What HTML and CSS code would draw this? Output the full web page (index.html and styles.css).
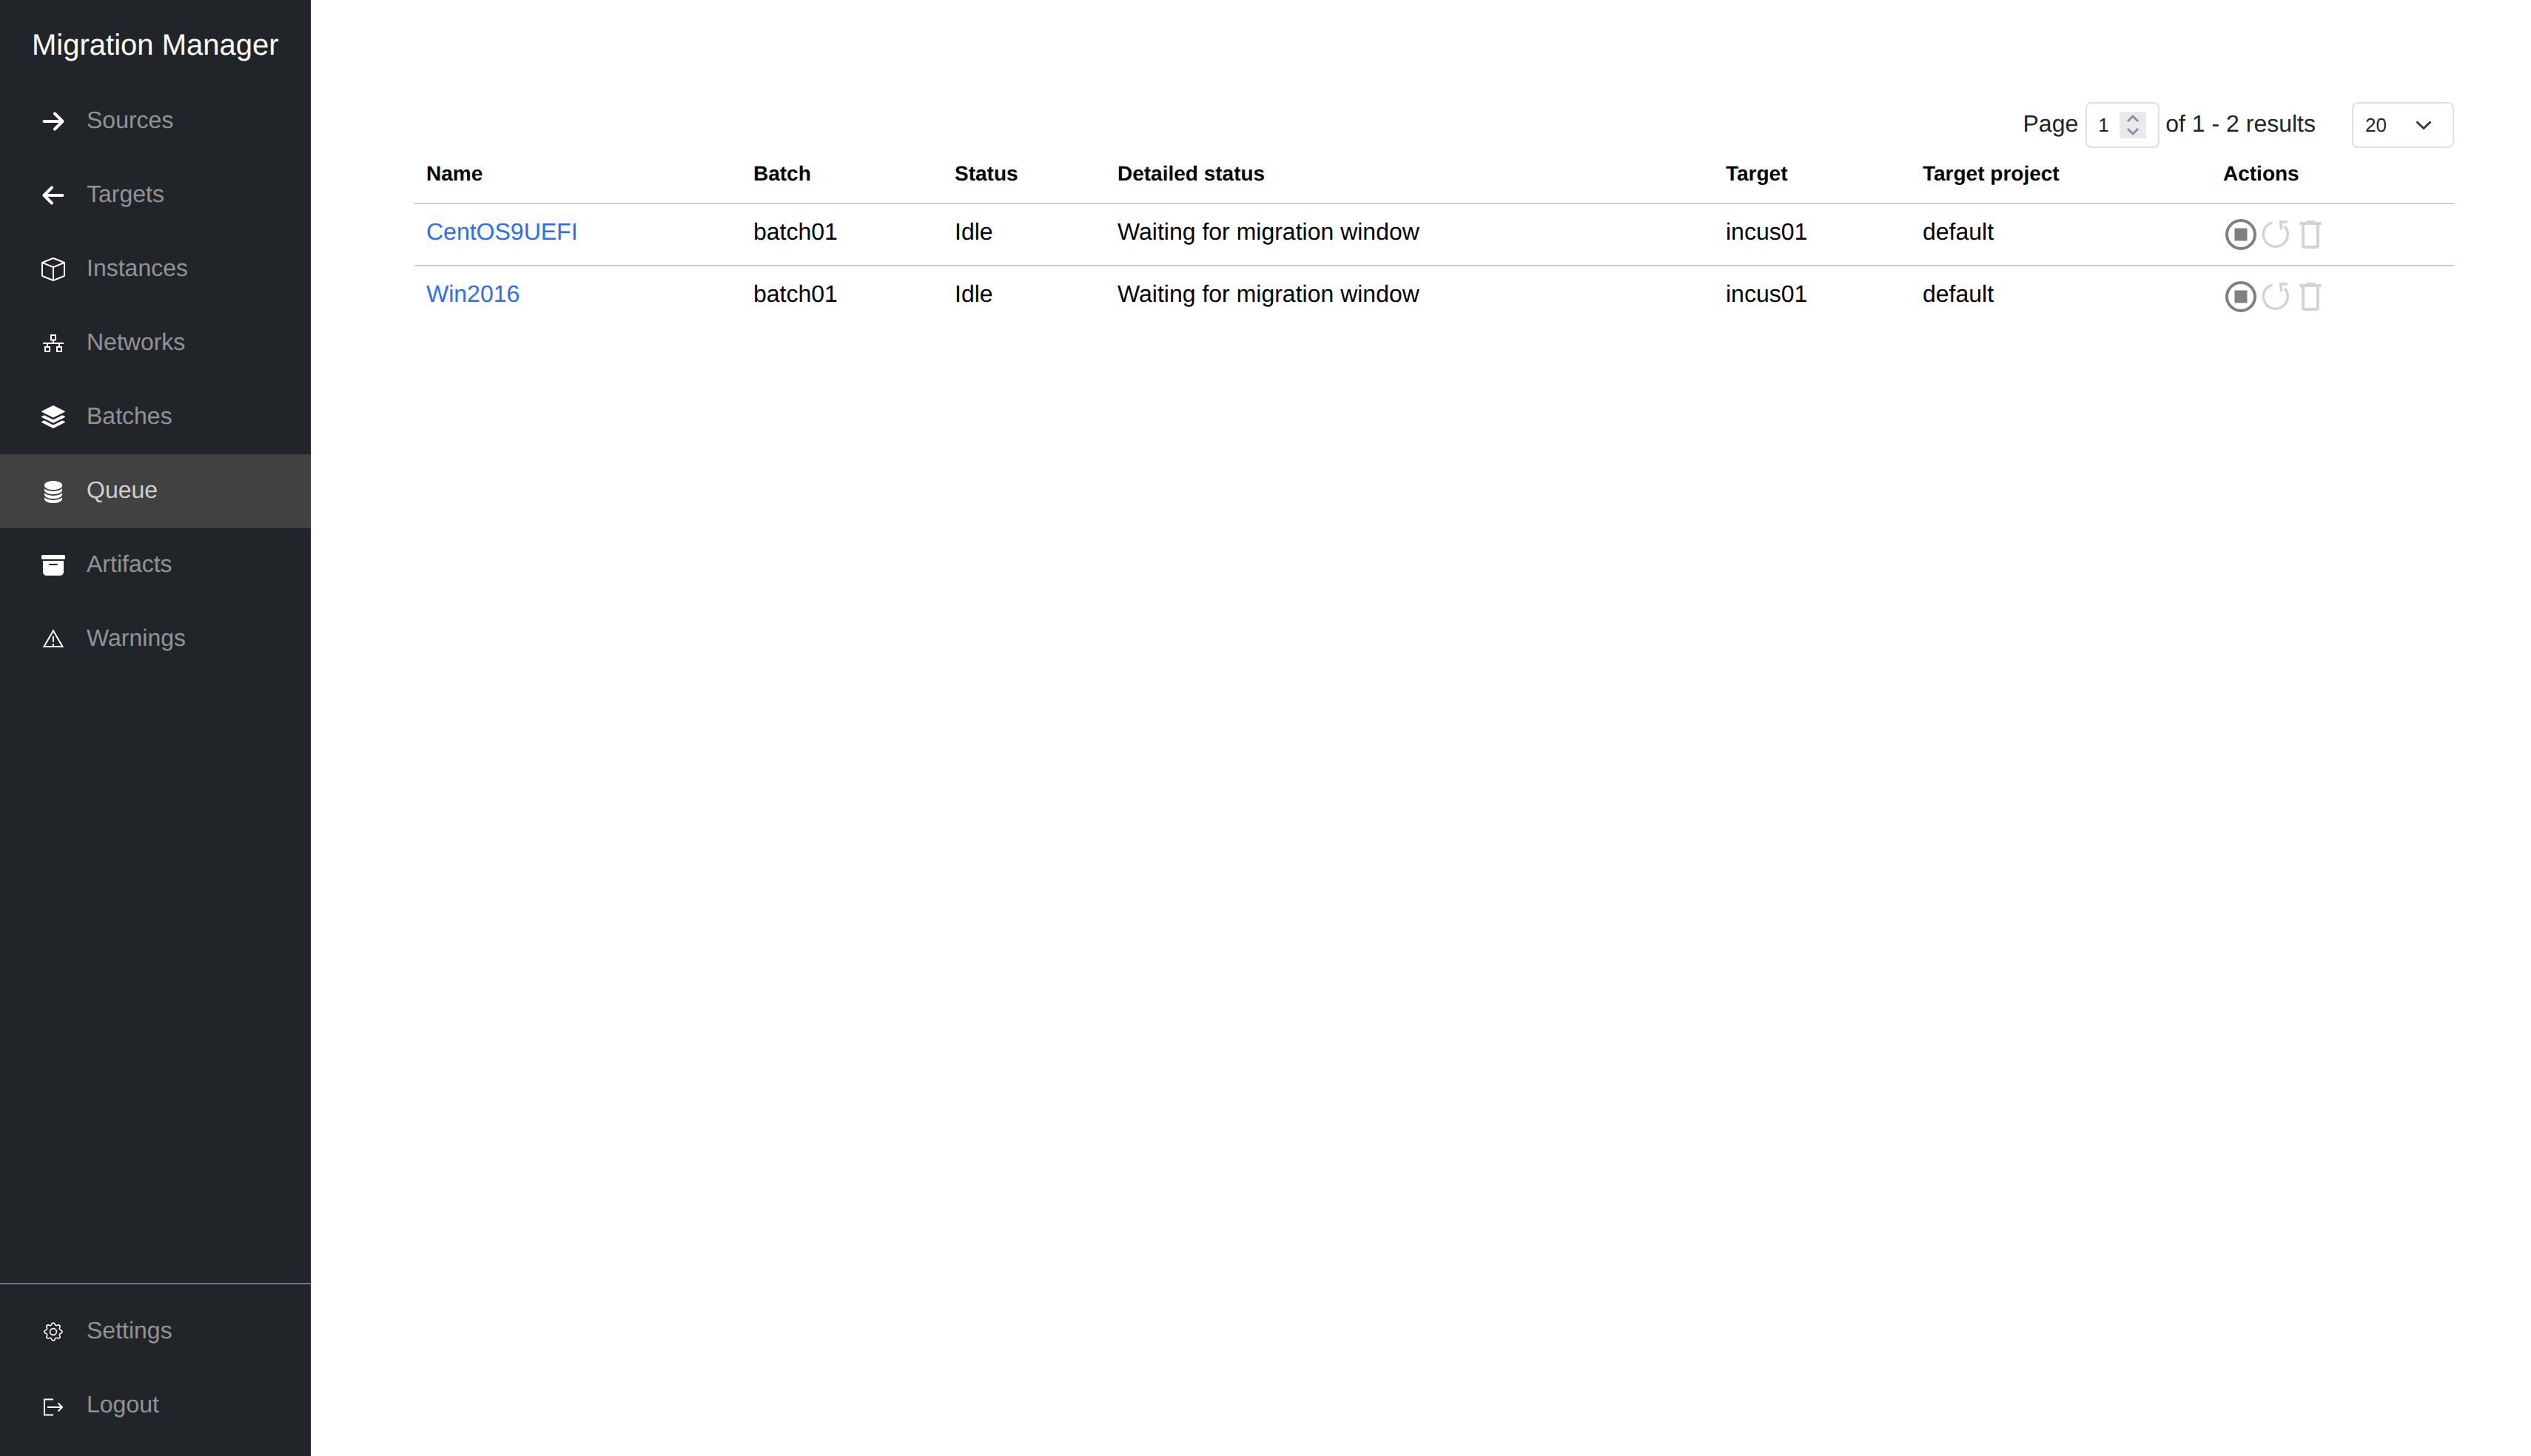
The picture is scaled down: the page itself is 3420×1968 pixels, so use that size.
FILE: index.html
```html
<!DOCTYPE html>
<html lang="en">
<head>
<meta charset="utf-8">
<title>Migration Manager</title>
<link rel="stylesheet" href="styles.css">
</head>
<body>
<div class="app">
  <aside class="sidebar">
    <div class="brand">Migration Manager</div>
    <nav class="nav">
      <a class="nav-item"><svg class="icon" viewBox="0 0 32 32"><path class="stroke bold" d="M3.5 16H28M18 5.5 28.5 16 18 26.5"/></svg><span>Sources</span></a>
      <a class="nav-item"><svg class="icon" viewBox="0 0 32 32"><path class="stroke bold" d="M28.5 16H4M14 5.5 3.5 16 14 26.5"/></svg><span>Targets</span></a>
      <a class="nav-item"><svg class="icon" viewBox="0 0 16 16"><path class="fill" d="M8.186 1.113a.5.5 0 0 0-.372 0L1.846 3.5 8 5.961 14.154 3.5zM15 4.239l-6.5 2.6v7.922l6.5-2.6V4.24zM7.5 14.762V6.838L1 4.239v7.925zM7.443.184a1.5 1.5 0 0 1 1.114 0l7.129 2.852A.5.5 0 0 1 16 3.5v8.662a1 1 0 0 1-.629.928l-7.185 2.874a.5.5 0 0 1-.372 0L.63 13.09a1 1 0 0 1-.63-.928V3.5a.5.5 0 0 1 .314-.464z"/></svg><span>Instances</span></a>
      <a class="nav-item"><svg class="icon" viewBox="0 0 32 32"><path class="stroke thin" d="M13 5h6v6.500h-6zM16 11.500V16M2 16h28M8 16v5M24 16v5M5 21h6v6H5zM21 21h6v6h-6z"/></svg><span>Networks</span></a>
      <a class="nav-item"><svg class="icon" viewBox="0 0 16 16"><path class="fill" d="m14.120 10.163 1.715.858c.22.11.22.424 0 .534L8.267 15.340a.6.6 0 0 1-.534 0L.165 11.555a.299.299 0 0 1 0-.534l1.716-.858 5.317 2.659c.505.252 1.100.252 1.604 0l5.317-2.660z"/><path class="fill" d="m14.120 6.576 1.715.858c.22.11.22.424 0 .534l-7.568 3.784a.6.6 0 0 1-.534 0L.165 7.968a.299.299 0 0 1 0-.534l1.716-.858 5.317 2.659c.505.252 1.100.252 1.604 0z"/><path class="fill" d="M7.733.063a.6.6 0 0 1 .534 0l7.568 3.784a.3.3 0 0 1 0 .535L8.267 8.165a.6.6 0 0 1-.534 0L.165 4.382a.299.299 0 0 1 0-.535z"/></svg><span>Batches</span></a>
      <a class="nav-item active"><svg class="icon" viewBox="0 0 16 16"><path class="fill" d="M3.904 1.777C4.978 1.289 6.427 1 8 1s3.022.289 4.096.777C13.125 2.245 14 2.993 14 4s-.875 1.755-1.904 2.223C11.022 6.711 9.573 7 8 7s-3.022-.289-4.096-.777C2.875 5.755 2 5.007 2 4s.875-1.755 1.904-2.223"/><path class="fill" d="M2 6.161V7c0 1.007.875 1.755 1.904 2.223C4.978 9.710 6.427 10 8 10s3.022-.289 4.096-.777C13.125 8.755 14 8.007 14 7v-.839c-.457.432-1.004.751-1.490.972C11.278 7.693 9.682 8 8 8s-3.278-.307-4.510-.867c-.486-.22-1.033-.54-1.490-.972"/><path class="fill" d="M2 9.161V10c0 1.007.875 1.755 1.904 2.223C4.978 12.711 6.427 13 8 13s3.022-.289 4.096-.777C13.125 11.755 14 11.007 14 10v-.839c-.457.432-1.004.751-1.490.972-1.232.56-2.828.867-4.510.867s-3.278-.307-4.510-.867c-.486-.22-1.033-.54-1.490-.972"/><path class="fill" d="M2 12.161V13c0 1.007.875 1.755 1.904 2.223C4.978 15.711 6.427 16 8 16s3.022-.289 4.096-.777C13.125 14.755 14 14.007 14 13v-.839c-.457.432-1.004.751-1.490.972-1.232.56-2.828.867-4.510.867s-3.278-.307-4.510-.867c-.486-.22-1.033-.54-1.490-.972"/></svg><span>Queue</span></a>
      <a class="nav-item"><svg class="icon" viewBox="0 0 16 16"><path class="fill" d="M12.643 15C13.979 15 15 13.845 15 12.500V5H1v7.500C1 13.845 2.021 15 3.357 15zM5.500 7h5a.5.5 0 0 1 0 1h-5a.5.5 0 0 1 0-1M.8 1a.8.8 0 0 0-.8.8v1.400c0 .442.358.8.8.8h14.400c.442 0 .8-.358.8-.8V1.800a.8.8 0 0 0-.8-.8z"/></svg><span>Artifacts</span></a>
      <a class="nav-item"><svg class="icon" viewBox="0 0 32 32"><path class="stroke thin" d="M16 4.500 3.500 26h25zM16 12v8M16 22v3"/></svg><span>Warnings</span></a>
    </nav>
    <nav class="nav nav-bottom">
      <a class="nav-item"><svg class="icon" viewBox="-2 -2 20 20"><path class="fill" d="M8 4.754a3.246 3.246 0 1 0 0 6.492 3.246 3.246 0 0 0 0-6.492M5.754 8a2.246 2.246 0 1 1 4.492 0 2.246 2.246 0 0 1-4.492 0"/><path class="fill" d="M9.796 1.343c-.527-1.790-3.065-1.790-3.592 0l-.094.319a.873.873 0 0 1-1.255.52l-.292-.16c-1.640-.892-3.433.902-2.540 2.541l.159.292a.873.873 0 0 1-.52 1.255l-.319.094c-1.790.527-1.790 3.065 0 3.592l.319.094a.873.873 0 0 1 .52 1.255l-.16.292c-.892 1.640.901 3.434 2.541 2.540l.292-.159a.873.873 0 0 1 1.255.52l.094.319c.527 1.790 3.065 1.790 3.592 0l.094-.319a.873.873 0 0 1 1.255-.52l.292.16c1.640.893 3.434-.902 2.540-2.541l-.159-.292a.873.873 0 0 1 .52-1.255l.319-.094c1.790-.527 1.790-3.065 0-3.592l-.319-.094a.873.873 0 0 1-.52-1.255l.16-.292c.893-1.640-.902-3.433-2.541-2.540l-.292.159a.873.873 0 0 1-1.255-.52zm-2.633.283c.246-.835 1.428-.835 1.674 0l.094.319a1.873 1.873 0 0 0 2.693 1.115l.291-.16c.764-.415 1.600.42 1.184 1.185l-.159.292a1.873 1.873 0 0 0 1.116 2.692l.318.094c.835.246.835 1.428 0 1.674l-.319.094a1.873 1.873 0 0 0-1.115 2.693l.16.291c.415.764-.42 1.600-1.185 1.184l-.291-.159a1.873 1.873 0 0 0-2.693 1.116l-.094.318c-.246.835-1.428.835-1.674 0l-.094-.319a1.873 1.873 0 0 0-2.692-1.115l-.292.16c-.764.415-1.600-.42-1.184-1.185l.159-.291A1.873 1.873 0 0 0 1.945 8.930l-.319-.094c-.835-.246-.835-1.428 0-1.674l.319-.094A1.873 1.873 0 0 0 3.060 4.377l-.16-.292c-.415-.764.42-1.600 1.185-1.184l.292.159a1.873 1.873 0 0 0 2.692-1.115z"/></svg><span>Settings</span></a>
      <a class="nav-item"><svg class="icon" viewBox="0 0 32 32"><path class="stroke thin" d="M16 7.500H4V28.500H16M8 18H28M22.500 12.500 28 18l-5.500 5.500"/></svg><span>Logout</span></a>
    </nav>
  </aside>
  <main class="main">
    <div class="pager">
      <span class="pager-text page-label">Page</span>
      <span class="page-input"><span class="page-value">1</span><span class="spin"><svg viewBox="0 0 36 36" class="spin-icon"><path d="M11 13l7-7 7 7M11 23l7 7 7-7"/></svg></span></span>
      <span class="pager-text">of 1 - 2 results</span>
      <span class="page-size"><span>20</span><svg viewBox="0 0 24 14" class="chev"><path d="M2.500 2.500 12 11.500 21.500 2.500"/></svg></span>
    </div>
    <table class="grid">
      <colgroup><col class="c1"><col class="c2"><col class="c3"><col class="c4"><col class="c5"><col class="c6"><col class="c7"></colgroup>
      <thead>
        <tr><th>Name</th><th>Batch</th><th>Status</th><th>Detailed status</th><th>Target</th><th>Target project</th><th>Actions</th></tr>
      </thead>
      <tbody>
        <tr>
          <td><a class="link">CentOS9UEFI</a></td><td>batch01</td><td>Idle</td><td>Waiting for migration window</td><td>incus01</td><td>default</td>
          <td><span class="actions"><svg class="act" viewBox="0 0 44 44"><circle class="a-dark" cx="22" cy="22" r="19"/><rect class="a-fill" x="13.500" y="13.500" width="17" height="17"/></svg><svg class="act" viewBox="0 0 44 44"><path class="a-light" d="M17.500 5.900A16.500 16.500 0 1 0 34 10.700"/><path class="a-light" d="M38 5H28.700L29.700 15"/></svg><svg class="act" viewBox="0 0 44 44"><path class="a-trash" d="M12 9V37a2 2 0 0 0 2 2H30a2 2 0 0 0 2-2V9"/><path class="a-fill-light" d="M7.500 5h29v4h-29zM17 3h11v2H17z"/></svg></span></td>
        </tr>
        <tr>
          <td><a class="link">Win2016</a></td><td>batch01</td><td>Idle</td><td>Waiting for migration window</td><td>incus01</td><td>default</td>
          <td><span class="actions"><svg class="act" viewBox="0 0 44 44"><circle class="a-dark" cx="22" cy="22" r="19"/><rect class="a-fill" x="13.500" y="13.500" width="17" height="17"/></svg><svg class="act" viewBox="0 0 44 44"><path class="a-light" d="M17.500 5.900A16.500 16.500 0 1 0 34 10.700"/><path class="a-light" d="M38 5H28.700L29.700 15"/></svg><svg class="act" viewBox="0 0 44 44"><path class="a-trash" d="M12 9V37a2 2 0 0 0 2 2H30a2 2 0 0 0 2-2V9"/><path class="a-fill-light" d="M7.500 5h29v4h-29zM17 3h11v2H17z"/></svg></span></td>
        </tr>
      </tbody>
    </table>
  </main>
</div>
</body>
</html>
```

FILE: styles.css
```css
* { box-sizing: border-box; }
html, body { margin: 0; padding: 0; background: #fff; }
body { font-family: "Liberation Sans", Arial, sans-serif; font-size: 32px; color: #212529; text-rendering: geometricPrecision; }

.app { display: flex; height: 1968px; overflow: hidden; }

.sidebar { width: 420px; flex: none; background: #212529; display: flex; flex-direction: column; padding-bottom: 18px; }
.brand { color: #fff; font-size: 40px; line-height: 60px; padding: 31px 0 0 43px; height: 114px; }
.nav { display: flex; flex-direction: column; }
.nav-bottom { margin-top: auto; border-top: 2px solid #6c757d; padding-top: 14px; }
.nav-item { height: 100px; display: flex; align-items: center; padding-left: 56px; gap: 29px; color: rgba(255,255,255,.5); font-size: 32px; }
.nav-item span { position: relative; top: -2px; }
.nav-item.active { background: #414141; color: rgba(255,255,255,.75); }
.icon { width: 32px; height: 32px; flex: none; display: block; }
.fill { fill: #fff; }
.stroke { fill: none; stroke: #fff; }
.bold { stroke-width: 4; stroke-linecap: round; stroke-linejoin: round; }
.thin { stroke-width: 2; }

.main { flex: 1; min-width: 0; padding: 138px 104px 0 140px; }

.pager { display: flex; justify-content: flex-end; align-items: center; height: 62px; }
.pager-text { position: relative; top: -2px; }
.page-label { margin-right: 10px; }
.page-input { width: 100px; height: 62px; border: 2px solid #dee2e6; border-radius: 8px; display: flex; align-items: center; padding-left: 15px; margin-right: 8px; font-size: 26px; color: #212529; }
.page-value { width: 29px; }
.spin { width: 36px; height: 36px; background: #e9e9ed; display: block; }
.spin-icon { width: 36px; height: 36px; display: block; fill: none; stroke: #8f8f9d; stroke-width: 3; }
.page-size { width: 138px; height: 62px; margin-left: 49px; border: 2px solid #dee2e6; border-radius: 8px; display: flex; align-items: center; padding-left: 16px; font-size: 26px; color: #212529; }
.chev { width: 24px; height: 14px; margin-left: 38px; fill: none; stroke: #343a40; stroke-width: 3; }

.grid { width: 2756px; table-layout: fixed; border-collapse: collapse; color: #000; }
.c1 { width: 442px; } .c2 { width: 272px; } .c3 { width: 220px; } .c4 { width: 822px; } .c5 { width: 266px; } .c6 { width: 406px; } .c7 { width: 328px; }
.grid th { height: 75px; padding: 0 16px 4px; text-align: left; font-size: 28px; font-weight: 700; border-bottom: 2px solid #ccc; }
.grid td { height: 82px; padding: 13px 16px 21px; vertical-align: top; line-height: 48px; font-size: 32px; }
.grid tbody tr:first-child td { border-bottom: 2px solid #ccc; }
.link { color: #2a6ef5; }

.actions { display: flex; gap: 3px; margin: 6px 0 -6px 2px; }
.act { width: 44px; height: 44px; flex: none; display: block; }
.a-dark { fill: none; stroke: #808080; stroke-width: 4; }
.a-fill { fill: #808080; }
.a-light { fill: none; stroke: #d3d3d3; stroke-width: 3.500; }
.a-trash { fill: none; stroke: #d3d3d3; stroke-width: 4; }
.a-fill-light { fill: #d3d3d3; }
```
